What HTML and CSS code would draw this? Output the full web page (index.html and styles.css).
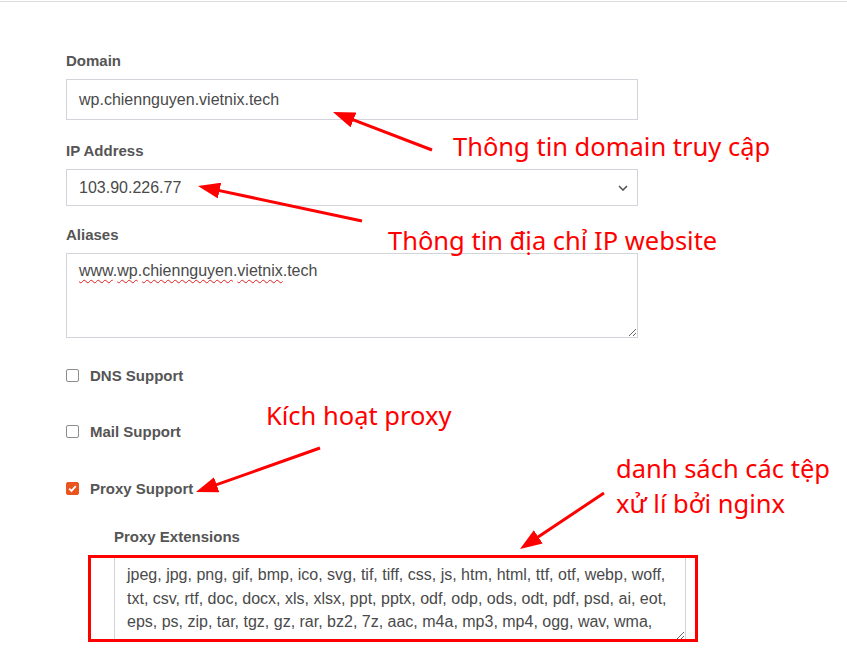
FILE: index.html
```html
<!DOCTYPE html>
<html lang="vi">
<head>
<meta charset="utf-8">
<title>Web domain</title>
<link rel="stylesheet" href="styles.css">
</head>
<body>
<div class="page">
  <form class="form">
    <div class="group g-domain">
      <label class="lbl">Domain</label>
      <div class="field">wp.chiennguyen.vietnix.tech</div>
    </div>
    <div class="group g-ip">
      <label class="lbl">IP Address</label>
      <div class="field select">
        <span>103.90.226.77</span>
        <svg class="chev" width="10" height="6" viewBox="0 0 10 6"><path d="M1 1 L5 5 L9 1" fill="none" stroke="#555" stroke-width="1.6"/></svg>
      </div>
    </div>
    <div class="group g-alias">
      <label class="lbl">Aliases</label>
      <div class="area alias"><span class="sp">www</span>.<span class="sp">wp</span>.<span class="sp">chiennguyen</span>.<span class="sp">vietnix</span>.tech</div>
    </div>
    <div class="check c-dns"><span class="cb"></span>DNS Support</div>
    <div class="check c-mail"><span class="cb"></span>Mail Support</div>
    <div class="check c-proxy"><span class="cb on"><svg width="13" height="13" viewBox="0 0 13 13"><path d="M3.2 6.6 L5.5 8.9 L9.8 4.2" fill="none" stroke="#fff" stroke-width="1.8"/></svg></span>Proxy Support</div>
    <div class="sub">
      <label class="lbl">Proxy Extensions</label>
      <textarea class="area ext" spellcheck="false">jpeg, jpg, png, gif, bmp, ico, svg, tif, tiff, css, js, htm, html, ttf, otf, webp, woff, txt, csv, rtf, doc, docx, xls, xlsx, ppt, pptx, odf, odp, ods, odt, pdf, psd, ai, eot, eps, ps, zip, tar, tgz, gz, rar, bz2, 7z, aac, m4a, mp3, mp4, ogg, wav, wma, 3gp, avi, flv, m4v, mkv, mov, mpeg, mpg, wmv, exe, iso, dmg, swf, woff2</textarea>
    </div>
  </form>

  <svg class="marks" width="847" height="657" viewBox="0 0 847 657">
    <defs>
      <marker id="ah" markerWidth="22" markerHeight="16" refX="12" refY="8" orient="auto" markerUnits="userSpaceOnUse">
        <path d="M0,0 L22,8 L0,16 z" fill="#f00"/>
      </marker>
    </defs>
    <line x1="432" y1="150" x2="342.3" y2="115.6" stroke="#f00" stroke-width="3" marker-end="url(#ah)"/>
    <line x1="362" y1="221" x2="207.8" y2="188.1" stroke="#f00" stroke-width="3" marker-end="url(#ah)"/>
    <line x1="320" y1="448" x2="205.4" y2="488.7" stroke="#f00" stroke-width="3" marker-end="url(#ah)"/>
    <line x1="604" y1="493" x2="528.3" y2="543.5" stroke="#f00" stroke-width="3" marker-end="url(#ah)"/>
    <rect x="89.5" y="556.5" width="607" height="84" fill="none" stroke="#f00" stroke-width="3"/>
  </svg>

  <div class="note n1">Thông tin domain truy cập</div>
  <div class="note n2">Thông tin địa chỉ IP website</div>
  <div class="note n3">Kích hoạt proxy</div>
  <div class="note n4">danh sách các tệp<br>xử lí bởi nginx</div>
</div>
</body>
</html>
```
FILE: styles.css
```css
html, body {
  margin: 0;
  padding: 0;
  background: #fff;
}

body {
  font-family: "Liberation Sans", Arial, sans-serif;
  color: #555;
}

.page {
  position: relative;
  height: 656px;
  overflow: hidden;
  border-top: 1px solid #dcdcdc;
  margin-top: 1px;
  box-sizing: border-box;
}

.form {
  display: flex;
  flex-direction: column;
  padding: 49px 0 0 66px;
  width: 572px;
}

.lbl {
  display: block;
  font-weight: bold;
  font-size: 15px;
  line-height: 20px;
  color: #555;
  margin-bottom: 8px;
}

.g-domain { margin-bottom: 21px; }
.g-ip { margin-bottom: 19px; }
.g-alias { margin-bottom: 27px; }

.field {
  box-sizing: border-box;
  width: 572px;
  height: 41px;
  border: 1px solid #d1d5da;
  padding: 0 12px;
  display: flex;
  align-items: center;
  font-size: 16px;
  color: #4a4a4a;
}

.select {
  height: 37px;
  justify-content: space-between;
  padding-right: 9px;
}

.chev {
  display: block;
}

.area {
  box-sizing: border-box;
  width: 572px;
  border: 1px solid #d1d5da;
  font-family: "Liberation Sans", Arial, sans-serif;
  font-size: 16px;
  color: #4a4a4a;
  background: #fff;
  resize: both;
  overflow: hidden;
  margin: 0;
  display: block;
}

.alias {
  height: 85px;
  padding: 5px 12px;
  line-height: 23px;
}

.sp {
  text-decoration: underline wavy #e02020;
  text-decoration-thickness: 1px;
  text-underline-offset: 3px;
}

.ext {
  height: 86px;
  padding: 7px 12px;
  line-height: 23.5px;
}

.check {
  display: flex;
  align-items: center;
  gap: 11px;
  height: 20px;
  font-weight: bold;
  font-size: 15px;
  color: #555;
}

.c-dns { margin-bottom: 36px; }
.c-mail { margin-bottom: 37px; }
.c-proxy { margin-bottom: 29px; }

.cb {
  box-sizing: border-box;
  width: 13px;
  height: 13px;
  border: 1px solid #8d8d8d;
  border-radius: 2px;
  background: #fff;
  display: block;
}

.cb.on {
  background: #e9541f;
  border-color: #e9541f;
  position: relative;
}

.cb.on svg {
  position: absolute;
  left: -1px;
  top: -1px;
}

.sub {
  padding-left: 48px;
}

.sub .ext {
  width: 572px;
}

.marks {
  position: absolute;
  left: 0;
  top: -2px;
  pointer-events: none;
}

.note {
  position: absolute;
  font-family: "Noto Sans", "Open Sans", sans-serif;
  font-size: 25.5px;
  line-height: 30px;
  color: #f00;
  white-space: nowrap;
}

.n1 { left: 453px; top: 129px; }
.n2 { left: 388px; top: 223px; }
.n3 { left: 266px; top: 398px; }
.n4 { left: 616px; top: 449px; line-height: 35px; }
```
